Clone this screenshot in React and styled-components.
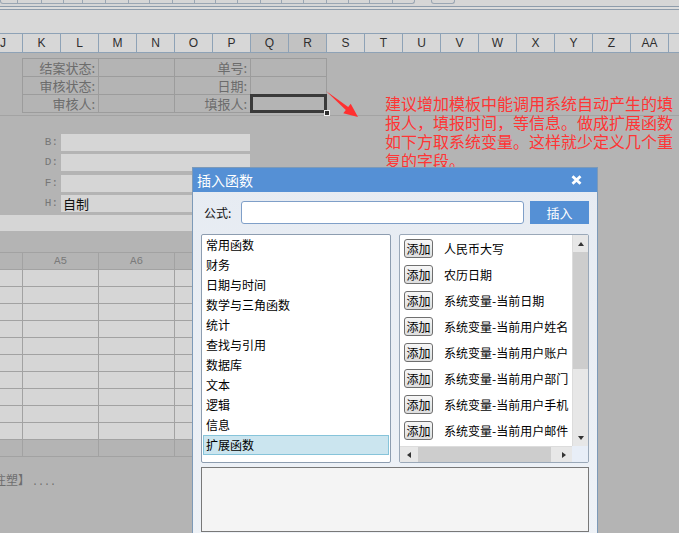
import React from 'react';
import styled, { createGlobalStyle } from 'styled-components';

const Global = createGlobalStyle`
  html, body { margin: 0; padding: 0; overflow: hidden; }
  body { font-family: "Noto Sans CJK SC", "Noto Sans", sans-serif; }
  * { box-sizing: border-box; }
`;

const Page = styled.div`
  position: relative;
  width: 679px;
  height: 533px;
  overflow: hidden;
  background: #b4b4b4;
  display: flex;
  flex-direction: column;
`;

/* ---------- top chrome ---------- */
const TopStrip = styled.div`
  height: 7px;
  flex: none;
  background: #d6d6d6;
  border-bottom: 1px solid #8e9cab;
  display: flex;
  align-items: flex-start;
`;
const ToolGroup = styled.div`
  display: flex;
  height: 4px;
  margin-left: ${p => p.$ml || 0}px;
  border: 1px solid #9aa6b3;
  border-top: none;
  border-radius: 0 0 3px 3px;
`;
const ToolCell = styled.div`
  width: ${p => p.$w}px;
  border-right: ${p => (p.$last ? 'none' : '1px solid #9aa6b3')};
`;
const ThinGap = styled.div`
  height: 3px;
  flex: none;
  background: #dcdcdc;
  border-bottom: 1px solid #8e9cab;
`;
const FormulaBar = styled.div`
  height: 23px;
  flex: none;
  background: #d8d8d8;
`;
const HeaderRow = styled.div`
  height: 20px;
  flex: none;
  display: flex;
  background: #d7d7d7;
  border-top: 1px solid #8ea2b6;
  border-bottom: 1px solid #8ea2b6;
`;
const ColHead = styled.div`
  flex: none;
  width: ${p => p.$w}px;
  border-right: 1px solid #8ea2b6;
  background: ${p => (p.$active ? '#c2c2c2' : 'transparent')};
  display: flex;
  align-items: center;
  justify-content: ${p => (p.$first ? 'flex-end' : 'center')};
  padding-right: ${p => (p.$first ? 16 : 0)}px;
  font-family: "Liberation Sans", Arial, sans-serif;
  font-size: 12px;
  color: #2e2e2e;
`;

/* ---------- sheet body ---------- */
const SheetBody = styled.div`
  display: flex;
  flex-direction: column;
`;
const FormTable = styled.div`
  margin: 5px 0 0 22px;
  display: grid;
  grid-template-columns: repeat(4, 76px);
  border-top: 1px solid #9c9c9c;
  border-left: 1px solid #9c9c9c;
  width: max-content;
`;
const FormCell = styled.div`
  position: relative;
  height: 18px;
  border-right: 1px solid #9c9c9c;
  border-bottom: 1px solid #9c9c9c;
  display: flex;
  align-items: center;
  justify-content: flex-end;
  padding-right: 3px;
  font-size: 13px;
  line-height: 17px;
  color: #6c6c6c;
  ${p =>
    p.$selected &&
    `
    &::after {
      content: '';
      position: absolute;
      left: -1px; top: -1px; right: -1px; bottom: -1px;
      border: 3px solid #3a3a3a;
    }
  `}
`;
const FillHandle = styled.span`
  position: absolute;
  right: -4px;
  bottom: -4px;
  width: 6px;
  height: 6px;
  background: #2e2e2e;
  border: 1px solid #f0f0f0;
  z-index: 1;
`;
const Separator = styled.div`
  margin-top: 2px;
  height: 1px;
  background: #a3a3a3;
`;
const Fields = styled.div`
  margin-top: 18px;
  display: flex;
  flex-direction: column;
  gap: 3.33px;
`;
const FieldRow = styled.div`
  display: flex;
  height: 17px;
`;
const FieldLabel = styled.div`
  width: 61px;
  padding-right: 3px;
  text-align: right;
  font-family: "Liberation Mono", monospace;
  font-size: 11px;
  line-height: 17px;
  color: #767676;
`;
const FieldBox = styled.div`
  width: 189px;
  background: #d6d6d6;
  font-size: 13px;
  line-height: 17px;
  padding-left: 2px;
  color: #111;
`;
const Band = styled.div`
  margin-top: 3px;
  height: 16px;
  width: 520px;
  background: #d6d6d6;
`;
const Grid = styled.div`
  margin-top: 21px;
  display: grid;
  grid-template-columns: 23px repeat(3, 76px);
  border-top: 1px solid #a2a2a2;
  width: max-content;
`;
const GridCell = styled.div`
  height: 17px;
  border-right: 1px solid #a2a2a2;
  border-bottom: 1px solid #a2a2a2;
  background: ${p => (p.$light ? '#d6d6d6' : 'transparent')};
  font-family: "Liberation Mono", monospace;
  font-size: 11px;
  line-height: 16px;
  text-align: center;
  color: #7a7a7a;
`;
const TailText = styled.div`
  margin: 16px 0 0 -6px;
  font-size: 12px;
  line-height: 14px;
  color: #6e6e6e;
  white-space: nowrap;
`;
const Dots = styled.span`
  font-family: "Liberation Mono", monospace;
  font-size: 10px;
  margin-left: 2px;
`;

/* ---------- annotation ---------- */
const Note = styled.div`
  position: absolute;
  left: 385px;
  top: 94px;
  width: 290px;
  font-size: 16px;
  line-height: 19px;
  color: #ff3535;
`;
const Arrow = styled.svg`
  position: absolute;
  left: 320px;
  top: 85px;
`;

/* ---------- dialog ---------- */
const Dialog = styled.div`
  position: absolute;
  left: 192px;
  top: 167px;
  width: 406px;
  height: 380px;
  border: 1px solid #7d9ab8;
  background: linear-gradient(#e6ebf2, #eef2f7);
  display: flex;
  flex-direction: column;
`;
const TitleBar = styled.div`
  height: 24px;
  flex: none;
  background: #5590d5;
  color: #fff;
  font-size: 14px;
  display: flex;
  align-items: center;
  justify-content: space-between;
  padding: 0 15px 0 4px;
`;
const DialogBody = styled.div`
  padding: 9px 8px 0 8px;
  display: flex;
  flex-direction: column;
`;
const FormulaRow = styled.div`
  display: flex;
  align-items: center;
  height: 23px;
`;
const FormulaLabel = styled.div`
  width: 40px;
  padding-left: 3px;
  font-size: 12px;
  color: #111;
`;
const FormulaInput = styled.div`
  flex: 1;
  height: 23px;
  background: #fff;
  border: 1px solid #7f9fc8;
  border-radius: 3px;
  margin-right: 6px;
`;
const InsertButton = styled.div`
  width: 59px;
  height: 23px;
  background: #5590d5;
  color: #fff;
  font-size: 13px;
  display: flex;
  align-items: center;
  justify-content: center;
`;
const ListsRow = styled.div`
  margin-top: 10px;
  height: 229px;
  display: grid;
  grid-template-columns: 190px 190px;
  column-gap: 8px;
`;
const CategoryList = styled.div`
  background: #fff;
  border: 1px solid #8d9db0;
  border-radius: 2px;
  padding: 0 1px;
  display: flex;
  flex-direction: column;
`;
const CategoryItem = styled.div`
  height: 20px;
  padding-left: 2px;
  border: 1px solid ${p => (p.$selected ? '#86c4da' : 'transparent')};
  background: ${p => (p.$selected ? '#cbe5ef' : 'transparent')};
  font-size: 12px;
  line-height: 18px;
  color: #000;
`;
const FuncList = styled.div`
  background: #fff;
  border: 1px solid #9aa8b8;
  border-radius: 2px;
  display: grid;
  grid-template-columns: 1fr 16px;
  grid-template-rows: 1fr 16px;
  overflow: hidden;
`;
const FuncContent = styled.div`
  overflow: hidden;
  padding: 4px 0 0 4px;
  display: flex;
  flex-direction: column;
  gap: 7px;
`;
const FuncRow = styled.div`
  display: flex;
  align-items: center;
  height: 19px;
  white-space: nowrap;
`;
const AddButton = styled.div`
  flex: none;
  width: 29px;
  height: 19px;
  border: 1px solid #6f6f6f;
  border-radius: 3px;
  background: linear-gradient(#f6f6f6, #dedede);
  font-size: 12px;
  line-height: 17px;
  text-align: center;
  color: #000;
`;
const FuncName = styled.span`
  margin-left: 11px;
  font-size: 12px;
  color: #000;
`;
const VScroll = styled.div`
  display: flex;
  flex-direction: column;
  background: #e7e7e7;
  border-left: 1px solid #dcdcdc;
`;
const HScroll = styled.div`
  display: flex;
  background: #e7e7e7;
  border-top: 1px solid #dcdcdc;
`;
const ArrowBox = styled.div`
  flex: none;
  width: ${p => (p.$h ? 17 : 15)}px;
  height: ${p => (p.$h ? 15 : 17)}px;
  display: flex;
  align-items: center;
  justify-content: center;
`;
const Tri = styled.span`
  width: 0;
  height: 0;
  ${p =>
    p.$dir === 'up'
      ? 'border-left:3.5px solid transparent;border-right:3.5px solid transparent;border-bottom:4px solid #333;'
      : p.$dir === 'down'
      ? 'border-left:3.5px solid transparent;border-right:3.5px solid transparent;border-top:4px solid #333;'
      : p.$dir === 'left'
      ? 'border-top:3.5px solid transparent;border-bottom:3.5px solid transparent;border-right:4px solid #333;'
      : 'border-top:3.5px solid transparent;border-bottom:3.5px solid transparent;border-left:4px solid #333;'}
`;
const Thumb = styled.div`
  flex: none;
  background: #cdcdcd;
  ${p => (p.$h ? `width:${p.$size}px; margin-left:1px;` : `height:${p.$size}px;`)}
`;
const Track = styled.div`
  flex: 1;
`;
const Corner = styled.div`
  background: #e8eef7;
`;
const Description = styled.div`
  margin-top: 4px;
  height: 65px;
  background: #f4f4f4;
  border: 1px solid #787878;
`;

const cols = ['K', 'L', 'M', 'N', 'O', 'P', 'Q', 'R', 'S', 'T', 'U', 'V', 'W', 'X', 'Y', 'Z', 'AA', ''];
const categories = ['常用函数', '财务', '日期与时间', '数学与三角函数', '统计', '查找与引用', '数据库', '文本', '逻辑', '信息', '扩展函数'];
const funcs = [
  '人民币大写',
  '农历日期',
  '系统变量-当前日期',
  '系统变量-当前用户姓名',
  '系统变量-当前用户账户',
  '系统变量-当前用户部门',
  '系统变量-当前用户手机',
  '系统变量-当前用户邮件',
];
const toolCells = [17, 24, 22, 19, 23, 23, 21, 23, 22, 21, 22, 23, 21, 22, 23, 22, 21, 23, 21];

export default function App() {
  return (
    <Page>
      <Global />
      <TopStrip>
        <ToolGroup>
          {toolCells.map((w, i) => (
            <ToolCell key={i} $w={w} $last={i === toolCells.length - 1} />
          ))}
        </ToolGroup>
        <ToolGroup $ml={16}>
          <ToolCell $w={22} $last />
        </ToolGroup>
      </TopStrip>
      <ThinGap />
      <FormulaBar />
      <HeaderRow>
        <ColHead $w={23} $first>J</ColHead>
        {cols.map((c, i) => (
          <ColHead key={i} $w={38} $active={c === 'Q' || c === 'R'}>
            {c}
          </ColHead>
        ))}
      </HeaderRow>

      <SheetBody>
        <FormTable>
          <FormCell>结案状态:</FormCell>
          <FormCell />
          <FormCell>单号:</FormCell>
          <FormCell />
          <FormCell>审核状态:</FormCell>
          <FormCell />
          <FormCell>日期:</FormCell>
          <FormCell />
          <FormCell>审核人:</FormCell>
          <FormCell />
          <FormCell>填报人:</FormCell>
          <FormCell $selected>
            <FillHandle />
          </FormCell>
        </FormTable>
        <Separator />
        <Fields>
          {['B', 'D', 'F', 'H'].map(l => (
            <FieldRow key={l}>
              <FieldLabel>{l}:</FieldLabel>
              <FieldBox>{l === 'H' ? '自制' : ''}</FieldBox>
            </FieldRow>
          ))}
        </Fields>
        <Band />
        <Grid>
          <GridCell />
          <GridCell>A5</GridCell>
          <GridCell>A6</GridCell>
          <GridCell />
          {Array.from({ length: 11 }).map((_, r) =>
            [0, 1, 2, 3].map(c => <GridCell key={`${r}-${c}`} $light={r < 10} />)
          )}
        </Grid>
        <TailText>
          注塑】<Dots>....</Dots>
        </TailText>
      </SheetBody>

      <Arrow width="45" height="40" viewBox="0 0 45 40">
        <polygon
          points="6,6 28.2,21.9 30.7,18.8 38,32 23.3,28.2 25.8,25.1"
          fill="#ff3030"
        />
      </Arrow>
      <Note>建议增加模板中能调用系统自动产生的填报人，填报时间，等信息。做成扩展函数如下方取系统变量。这样就少定义几个重复的字段。</Note>

      <Dialog>
        <TitleBar>
          <span>插入函数</span>
          <svg width="11" height="10" viewBox="0 0 11 10">
            <path d="M1.5 1.2 L9.5 8.8 M9.5 1.2 L1.5 8.8" stroke="#fff" strokeWidth="2.8" />
          </svg>
        </TitleBar>
        <DialogBody>
          <FormulaRow>
            <FormulaLabel>公式:</FormulaLabel>
            <FormulaInput />
            <InsertButton>插入</InsertButton>
          </FormulaRow>
          <ListsRow>
            <CategoryList>
              {categories.map(c => (
                <CategoryItem key={c} $selected={c === '扩展函数'}>
                  {c}
                </CategoryItem>
              ))}
            </CategoryList>
            <FuncList>
              <FuncContent>
                {funcs.map(f => (
                  <FuncRow key={f}>
                    <AddButton>添加</AddButton>
                    <FuncName>{f}</FuncName>
                  </FuncRow>
                ))}
              </FuncContent>
              <VScroll>
                <ArrowBox>
                  <Tri $dir="up" />
                </ArrowBox>
                <Thumb $size={117} />
                <Track />
                <ArrowBox>
                  <Tri $dir="down" />
                </ArrowBox>
              </VScroll>
              <HScroll>
                <ArrowBox $h>
                  <Tri $dir="left" />
                </ArrowBox>
                <Thumb $h $size={133} />
                <Track />
                <ArrowBox $h>
                  <Tri $dir="right" />
                </ArrowBox>
              </HScroll>
              <Corner />
            </FuncList>
          </ListsRow>
          <Description />
        </DialogBody>
      </Dialog>
    </Page>
  );
}
